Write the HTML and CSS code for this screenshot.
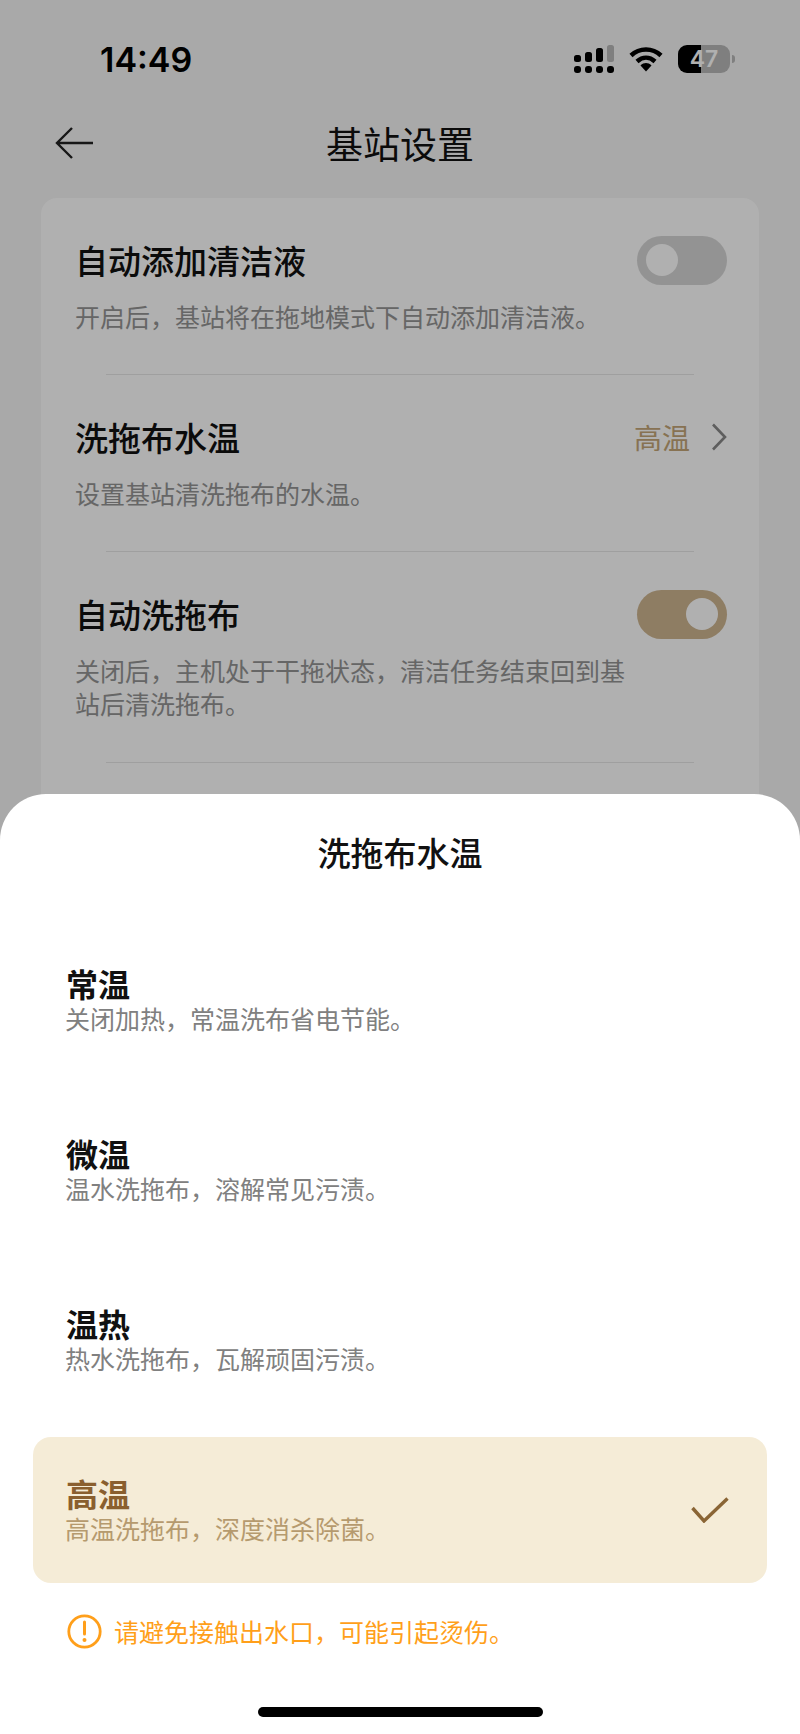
FILE: index.html
```html
<!DOCTYPE html>
<html lang="zh">
<head>
    <meta charset="UTF-8">
    <meta name="viewport" content="width=device-width, initial-scale=1.0">
    <title>基站设置</title>
    <link rel="stylesheet" href="styles.css">
</head>
<body>
    <div class="page">
        <div class="status">
            <span class="time">14:49</span>
            <div class="status-icons">
                <svg class="signal" width="40" height="28" viewBox="0 0 40 28">
                    <rect x="0" y="10" width="7" height="7" rx="2.5"/>
                    <rect x="11" y="7" width="7" height="10" rx="2.5"/>
                    <rect x="22" y="3" width="7" height="14" rx="2.5"/>
                    <rect x="33" y="0" width="7" height="17" rx="2.5" fill="#b8b8b8"/>
                    <rect x="0" y="21" width="7" height="7" rx="3"/>
                    <rect x="11" y="21" width="7" height="7" rx="3"/>
                    <rect x="22" y="21" width="7" height="7" rx="3"/>
                    <rect x="33" y="21" width="7" height="7" rx="3"/>
                </svg>
                <svg class="wifi" width="34" height="26" viewBox="0 0 34 26">
                    <path d="M2 9.500C10.500 1.500 23.500 1.500 32 9.500" fill="none" stroke="#000" stroke-width="4.500"/>
                    <path d="M8 15.500C13.500 10.500 20.500 10.500 26 15.500" fill="none" stroke="#000" stroke-width="4.500"/>
                    <path d="M11.500 19.500C15 16.300 19 16.300 22.500 19.500L17 25.500Z"/>
                </svg>
                <div class="battery"><span>47</span></div>
                <div class="battery-tip"></div>
            </div>
        </div>

        <div class="nav">
            <svg class="back" width="38" height="32" viewBox="0 0 38 32">
                <path d="M17 1L2 16L17 31M2 16H38" fill="none" stroke="#222" stroke-width="2.400"/>
            </svg>
            <h1>基站设置</h1>
        </div>

        <div class="card">
            <div class="row">
                <div class="row-head">
                    <h2>自动添加清洁液</h2>
                    <div class="toggle"><i></i></div>
                </div>
                <p>开启后，基站将在拖地模式下自动添加清洁液。</p>
            </div>
            <div class="row">
                <div class="row-head">
                    <h2>洗拖布水温</h2>
                    <div class="value">
                        <span>高温</span>
                        <svg width="16" height="28" viewBox="0 0 16 28">
                            <path d="M2 1.500L14 14L2 26.500" fill="none" stroke="#888" stroke-width="2.600"/>
                        </svg>
                    </div>
                </div>
                <p>设置基站清洗拖布的水温。</p>
            </div>
            <div class="row">
                <div class="row-head">
                    <h2>自动洗拖布</h2>
                    <div class="toggle on"><i></i></div>
                </div>
                <p>关闭后，主机处于干拖状态，清洁任务结束回到基站后清洗拖布。</p>
            </div>
        </div>
    </div>

    <div class="overlay"></div>

    <div class="sheet">
        <h3>洗拖布水温</h3>
        <div class="options">
            <div class="option">
                <div>
                    <h4>常温</h4>
                    <p>关闭加热，常温洗布省电节能。</p>
                </div>
            </div>
            <div class="option">
                <div>
                    <h4>微温</h4>
                    <p>温水洗拖布，溶解常见污渍。</p>
                </div>
            </div>
            <div class="option">
                <div>
                    <h4>温热</h4>
                    <p>热水洗拖布，瓦解顽固污渍。</p>
                </div>
            </div>
            <div class="option selected">
                <div>
                    <h4>高温</h4>
                    <p>高温洗拖布，深度消杀除菌。</p>
                </div>
                <svg width="38" height="26" viewBox="0 0 38 26">
                    <path d="M1.500 11L13 24L36.500 1.500" fill="none" stroke="#8a6535" stroke-width="3.400"/>
                </svg>
            </div>
        </div>
        <div class="warning">
            <svg width="35" height="35" viewBox="0 0 35 35">
                <circle cx="17.500" cy="17.500" r="15.700" fill="none" stroke="#ff9f1a" stroke-width="2.800"/>
                <path d="M17.500 8V20" stroke="#ff9f1a" stroke-width="3" stroke-linecap="round"/>
                <circle cx="17.500" cy="26" r="2" fill="#ff9f1a"/>
            </svg>
            <span>请避免接触出水口，可能引起烫伤。</span>
        </div>
        <div class="home-bar"></div>
    </div>
</body>
</html>
```

FILE: styles.css
```css
* {
    box-sizing: border-box;
}
body {
    margin: 0;
    height: 1734px;
    overflow: hidden;
    position: relative;
    font-family: "Noto Sans CJK SC", "Noto Sans", sans-serif;
    background-color: #f5f5f5;
    color: #111;
}
h1, h2, h3, h4, p {
    margin: 0;
    font-weight: 400;
}
.page {
    padding-top: 45px;
}

/* status bar */
.status {
    display: flex;
    justify-content: space-between;
    align-items: center;
    height: 28px;
    padding: 0 65px 0 100px;
}
.time {
    font-family: Inter, sans-serif;
    font-size: 34px;
    font-weight: 600;
    color: #000;
}
.status-icons {
    display: flex;
    align-items: center;
}
.signal {
    margin-right: 15px;
}
.wifi {
    margin-right: 15px;
}
.battery {
    width: 52px;
    height: 28px;
    border-radius: 9px;
    background: linear-gradient(90deg, #000 45%, #b8b8b8 45%);
    text-align: center;
    font-family: Inter, sans-serif;
    font-size: 23px;
    font-weight: 600;
    line-height: 28px;
    color: #fff;
}
.battery-tip {
    width: 3px;
    height: 8px;
    margin-left: 2px;
    border-radius: 0 4px 4px 0;
    background: #b8b8b8;
}

/* nav */
.nav {
    position: relative;
    height: 46px;
    margin-top: 47px;
    text-align: center;
}
.back {
    position: absolute;
    left: 55px;
    top: 7px;
}
h1 {
    font-size: 37px;
    line-height: 46px;
    color: #111;
}

/* settings card */
.card {
    margin: 32px 41px 0;
    background: #fff;
    border-radius: 16px;
    height: 640px;
}
.row {
    margin: 0 65px;
    padding: 37px 0 41px;
    border-bottom: 1px solid #e6e6e6;
}
.row:last-child {
    padding-bottom: 42px;
}
.row-head {
    display: flex;
    justify-content: space-between;
    align-items: center;
    height: 50px;
    margin: 0 -33px 0 -31px;
}
h2 {
    font-size: 33px;
    font-weight: 500;
    line-height: 50px;
}
.row p {
    margin: 15px -31px 0;
    max-width: 560px;
    font-size: 25px;
    line-height: 33px;
    color: #949494;
}
.value {
    display: flex;
    align-items: center;
    gap: 21px;
    font-size: 28px;
    color: #c4a678;
}
.toggle {
    width: 90px;
    height: 49px;
    padding: 8px 9px;
    border-radius: 25px;
    background: #d6d6d6;
}
.toggle i {
    display: block;
    width: 32px;
    height: 32px;
    border-radius: 50%;
    background: #fff;
}
.toggle.on {
    background: #ceb590;
}
.toggle.on i {
    margin-left: 40px;
}

/* dim layer and bottom sheet */
.overlay {
    position: absolute;
    inset: 0;
    background: rgba(0, 0, 0, 0.31);
}
.sheet {
    position: absolute;
    left: 0;
    right: 0;
    top: 794px;
    bottom: 0;
    background: #fff;
    border-radius: 46px 46px 0 0;
}
h3 {
    margin-top: 35px;
    text-align: center;
    font-size: 33px;
    font-weight: 500;
    line-height: 46px;
}
.options {
    display: flex;
    flex-direction: column;
    gap: 24px;
    margin: 52px 33px 0;
}
.option {
    display: flex;
    justify-content: space-between;
    align-items: center;
    height: 146px;
    padding: 0 38px 0 32px;
    border-radius: 18px;
}
.option h4 {
    margin-left: 1px;
    font-size: 32px;
    font-weight: 700;
    line-height: 36px;
}
.option p {
    font-size: 25px;
    line-height: 34px;
    color: #808080;
}
.selected {
    background: #f5ecd7;
}
.selected h4 {
    color: #8a5f2e;
}
.selected p {
    color: #b59a6e;
}
.warning {
    display: flex;
    align-items: center;
    gap: 12px;
    margin: 31px 0 0 67px;
    font-size: 25px;
    line-height: 35px;
    color: #ff9f1a;
}
.home-bar {
    width: 285px;
    height: 10px;
    margin: 58px auto 0;
    border-radius: 5px;
    background: #000;
}
```
